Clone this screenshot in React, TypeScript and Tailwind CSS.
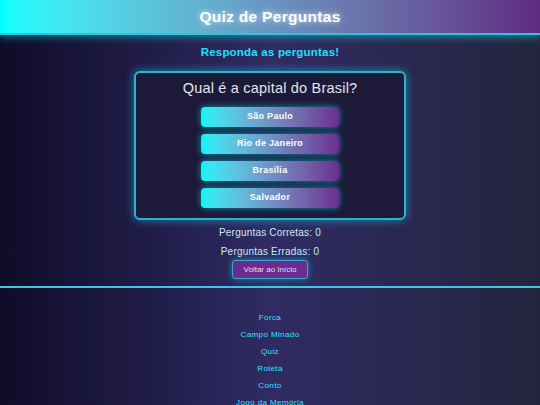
const options = ["São Paulo", "Rio de Janeiro", "Brasília", "Salvador"];
const links = ["Forca", "Campo Minado", "Quiz", "Roleta", "Conto", "Jogo da Memória"];

export default function App() {
  return (
    <div className="min-h-screen bg-gradient-to-r from-[#0f0c29] via-[#302b63] to-[#24243e] font-['Liberation_Sans',sans-serif] flex flex-col items-center">
      {/* Header */}
      <header className="w-full h-[35px] flex items-center justify-center bg-gradient-to-r from-[#00ffff] to-[#5f2c82] border-b-2 border-[#2ec5d8] shadow-[0_2px_8px_rgba(0,255,255,0.45)]">
        <h1 className="text-white text-[15.5px] font-bold tracking-[0.3px] [text-shadow:0_0_6px_rgba(255,255,255,0.8)]">
          Quiz de Perguntas
        </h1>
      </header>

      <p className="mt-[9px] leading-[16px] text-[11.5px] font-bold text-[#1fe0f5] tracking-[0.2px]">
        Responda as perguntas!
      </p>

      {/* Card */}
      <div className="mt-[11px] w-[272px] bg-[#1c1a38] border-2 border-[#2bb3c9] rounded-md shadow-[0_0_10px_rgba(0,230,255,0.55)] flex flex-col items-center pt-[5px] pb-[10px]">
        <h2 className="text-[14.5px] leading-[20px] text-[#e4e4ee] tracking-[0.2px]">Qual é a capital do Brasil?</h2>
        <div className="mt-[9px] flex flex-col gap-[7px]">
          {options.map((o) => (
            <button
              key={o}
              className="w-[138px] h-[20px] rounded-[4px] bg-gradient-to-r from-[#00f5fa] to-[#6b2d8f] text-white text-[9px] font-bold shadow-[0_0_6px_rgba(0,230,255,0.6)] tracking-[0.3px]"
            >
              {o}
            </button>
          ))}
        </div>
      </div>

      <p className="mt-[6px] leading-[14px] text-[10px] text-[#c6ecfa] tracking-[0.2px]">Perguntas Corretas: 0</p>
      <p className="mt-[5px] leading-[14px] text-[10px] text-[#c6ecfa] tracking-[0.2px]">Perguntas Erradas: 0</p>
      <button className="mt-[1px] w-[76px] h-[19px] rounded-[3px] bg-[#6a2c91] border border-[#3aa6c8] text-[#e6dff0] text-[8px] shadow-[0_0_6px_rgba(0,230,255,0.55)]">
        Voltar ao Início
      </button>

      <div className="mt-[7px] w-full h-[1.5px] bg-[#3cc8e4]" />

      {/* Footer */}
      <nav className="pt-[21px] flex flex-col items-center">
        {links.map((l) => (
          <a key={l} href="#" className="leading-[17px] text-[8px] text-[#2ee6ff] tracking-[0.4px]">
            {l}
          </a>
        ))}
      </nav>
    </div>
  );
}
